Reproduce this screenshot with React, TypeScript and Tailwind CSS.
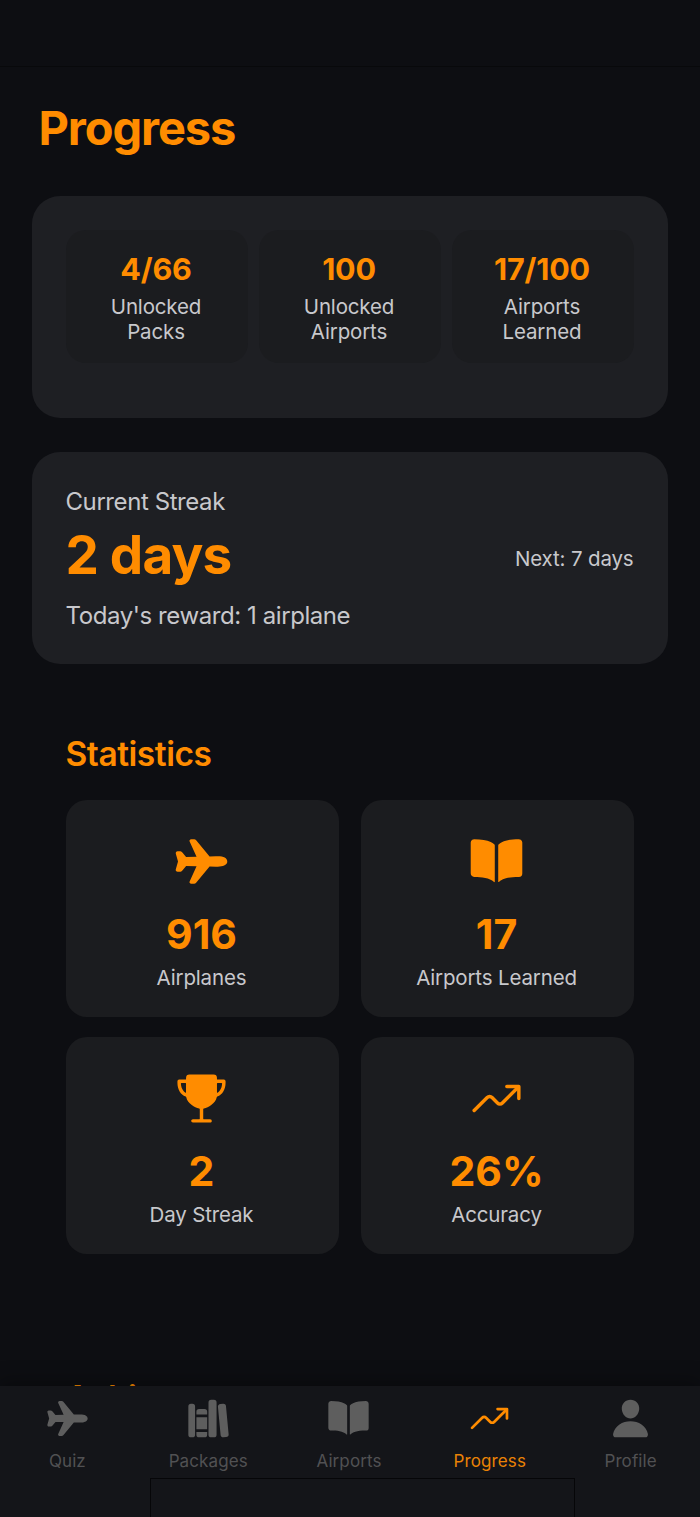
import React from 'react';
import type { IconType } from 'react-icons';
import { IoAirplane, IoBook, IoLibrary, IoPerson, IoTrendingUp, IoTrophy } from 'react-icons/io5';

type Summary = { value: string; lines: [string, string] };
type Stat = { icon: IconType; value: string; label: string };
type Tab = { icon: IconType; label: string; active?: boolean };

const summary: Summary[] = [
  { value: '4/66', lines: ['Unlocked', 'Packs'] },
  { value: '100', lines: ['Unlocked', 'Airports'] },
  { value: '17/100', lines: ['Airports', 'Learned'] },
];

const stats: Stat[] = [
  { icon: IoAirplane, value: '916', label: 'Airplanes' },
  { icon: IoBook, value: '17', label: 'Airports Learned' },
  { icon: IoTrophy, value: '2', label: 'Day Streak' },
  { icon: IoTrendingUp, value: '26%', label: 'Accuracy' },
];

const tabs: Tab[] = [
  { icon: IoAirplane, label: 'Quiz' },
  { icon: IoLibrary, label: 'Packages' },
  { icon: IoBook, label: 'Airports' },
  { icon: IoTrendingUp, label: 'Progress', active: true },
  { icon: IoPerson, label: 'Profile' },
];

function SummaryCard() {
  return (
    <section className="h-[222px] rounded-[28px] bg-[#1e1f23] px-[34px] pt-[34px]">
      <div className="grid grid-cols-3 gap-[11px]">
        {summary.map((item) => (
          <div key={item.value} className="h-[133px] rounded-[20px] bg-[#1b1c1f] pt-[22px] pr-px text-center">
            <div className="text-[30.5px] leading-[34px] font-bold tracking-[-0.2px] text-[#ff8c00]">{item.value}</div>
            <div className="mt-[9px] text-[20.5px] leading-[24.7px] tracking-[-0.15px] text-[#c8c8cc]">
              {item.lines[0]}
              <br />
              {item.lines[1]}
            </div>
          </div>
        ))}
      </div>
    </section>
  );
}

function StreakCard() {
  return (
    <section className="mt-[34px] h-[212px] rounded-[28px] bg-[#1e1f23] p-[34px] text-[24px] leading-[29px] tracking-[-0.42px] text-[#c8c8cc]">
      <div className="pt-px">Current Streak</div>
      <div className="flex h-[85px] items-center justify-between">
        <div className="pb-[7px] text-[53px] leading-[64px] font-bold tracking-[-0.8px] text-[#ff8c00]">2 days</div>
        <div className="text-[20.5px] leading-[25px] tracking-[-0.15px]">Next: 7 days</div>
      </div>
      <div>Today's reward: 1 airplane</div>
    </section>
  );
}

function StatCard({ icon: Icon, value, label }: Stat) {
  return (
    <div className="flex h-[217px] flex-col items-center rounded-[21px] bg-[#1b1c1f] pt-[34px] pr-px">
      <Icon className="size-[55px] text-[#ff8c00]" />
      <div className="mt-[21px] text-[41px] leading-[48px] font-bold text-[#ff8c00]">{value}</div>
      <div className="mt-[8px] text-[20.5px] leading-[24px] tracking-[-0.15px] text-[#c8c8cc]">{label}</div>
    </div>
  );
}

function TabBar() {
  return (
    <nav className="absolute inset-x-0 bottom-0 h-[131px] overflow-visible bg-[#141519] shadow-[0_-4px_18px_rgba(0,0,0,0.35)]">
      <div className="-mr-[1px] -ml-[3px] flex h-[92px] pt-[11px]">
        {tabs.map(({ icon: Icon, label, active }) => (
          <div
            key={label}
            className={`flex flex-1 flex-col items-center ${active ? 'text-[#ff8c00]' : 'text-[#5e5e5e]'}`}
          >
            <Icon className="size-[43px]" />
            <span
              className={`mt-[10px] text-[17px] leading-[22px] tracking-[0.1px] ${active ? 'text-[#ea8205]' : 'text-[#515153]'}`}
            >
              {label}
            </span>
          </div>
        ))}
      </div>
      {/* home indicator area */}
      <div className="ml-[150px] h-[39px] w-[425px] border border-b-0 border-[#060608]" />
    </nav>
  );
}

export default function App() {
  return (
    <div className="relative h-[1517px] w-[700px] overflow-hidden bg-[#0d0e12] font-[Inter,'Liberation_Sans',sans-serif]">
      <header className="h-[67px] border-b border-[#08090b]" />
      <main className="pr-[32.5px] pl-[31.5px]">
        <h1 className="mb-[39px] pt-[31px] pl-[7px] text-[47px] leading-[59px] font-bold tracking-[-1.1px] text-[#ff8c00]">
          Progress
        </h1>
        <SummaryCard />
        <StreakCard />
        <div className="px-[34px] pt-[70px]">
          <h2 className="text-[33.5px] leading-[40px] font-semibold tracking-[-0.45px] text-[#ff8c00]">Statistics</h2>
          <div className="mt-[26px] grid grid-cols-2 gap-x-[22px] gap-y-[20.4px]">
            {stats.map((stat) => (
              <StatCard key={stat.label} {...stat} />
            ))}
          </div>
          <h2 className="mt-[123.6px] text-[33.5px] leading-[40px] font-semibold tracking-[-0.45px] text-[#ff8c00]">
            Achievements
          </h2>
        </div>
      </main>
      <TabBar />
    </div>
  );
}
